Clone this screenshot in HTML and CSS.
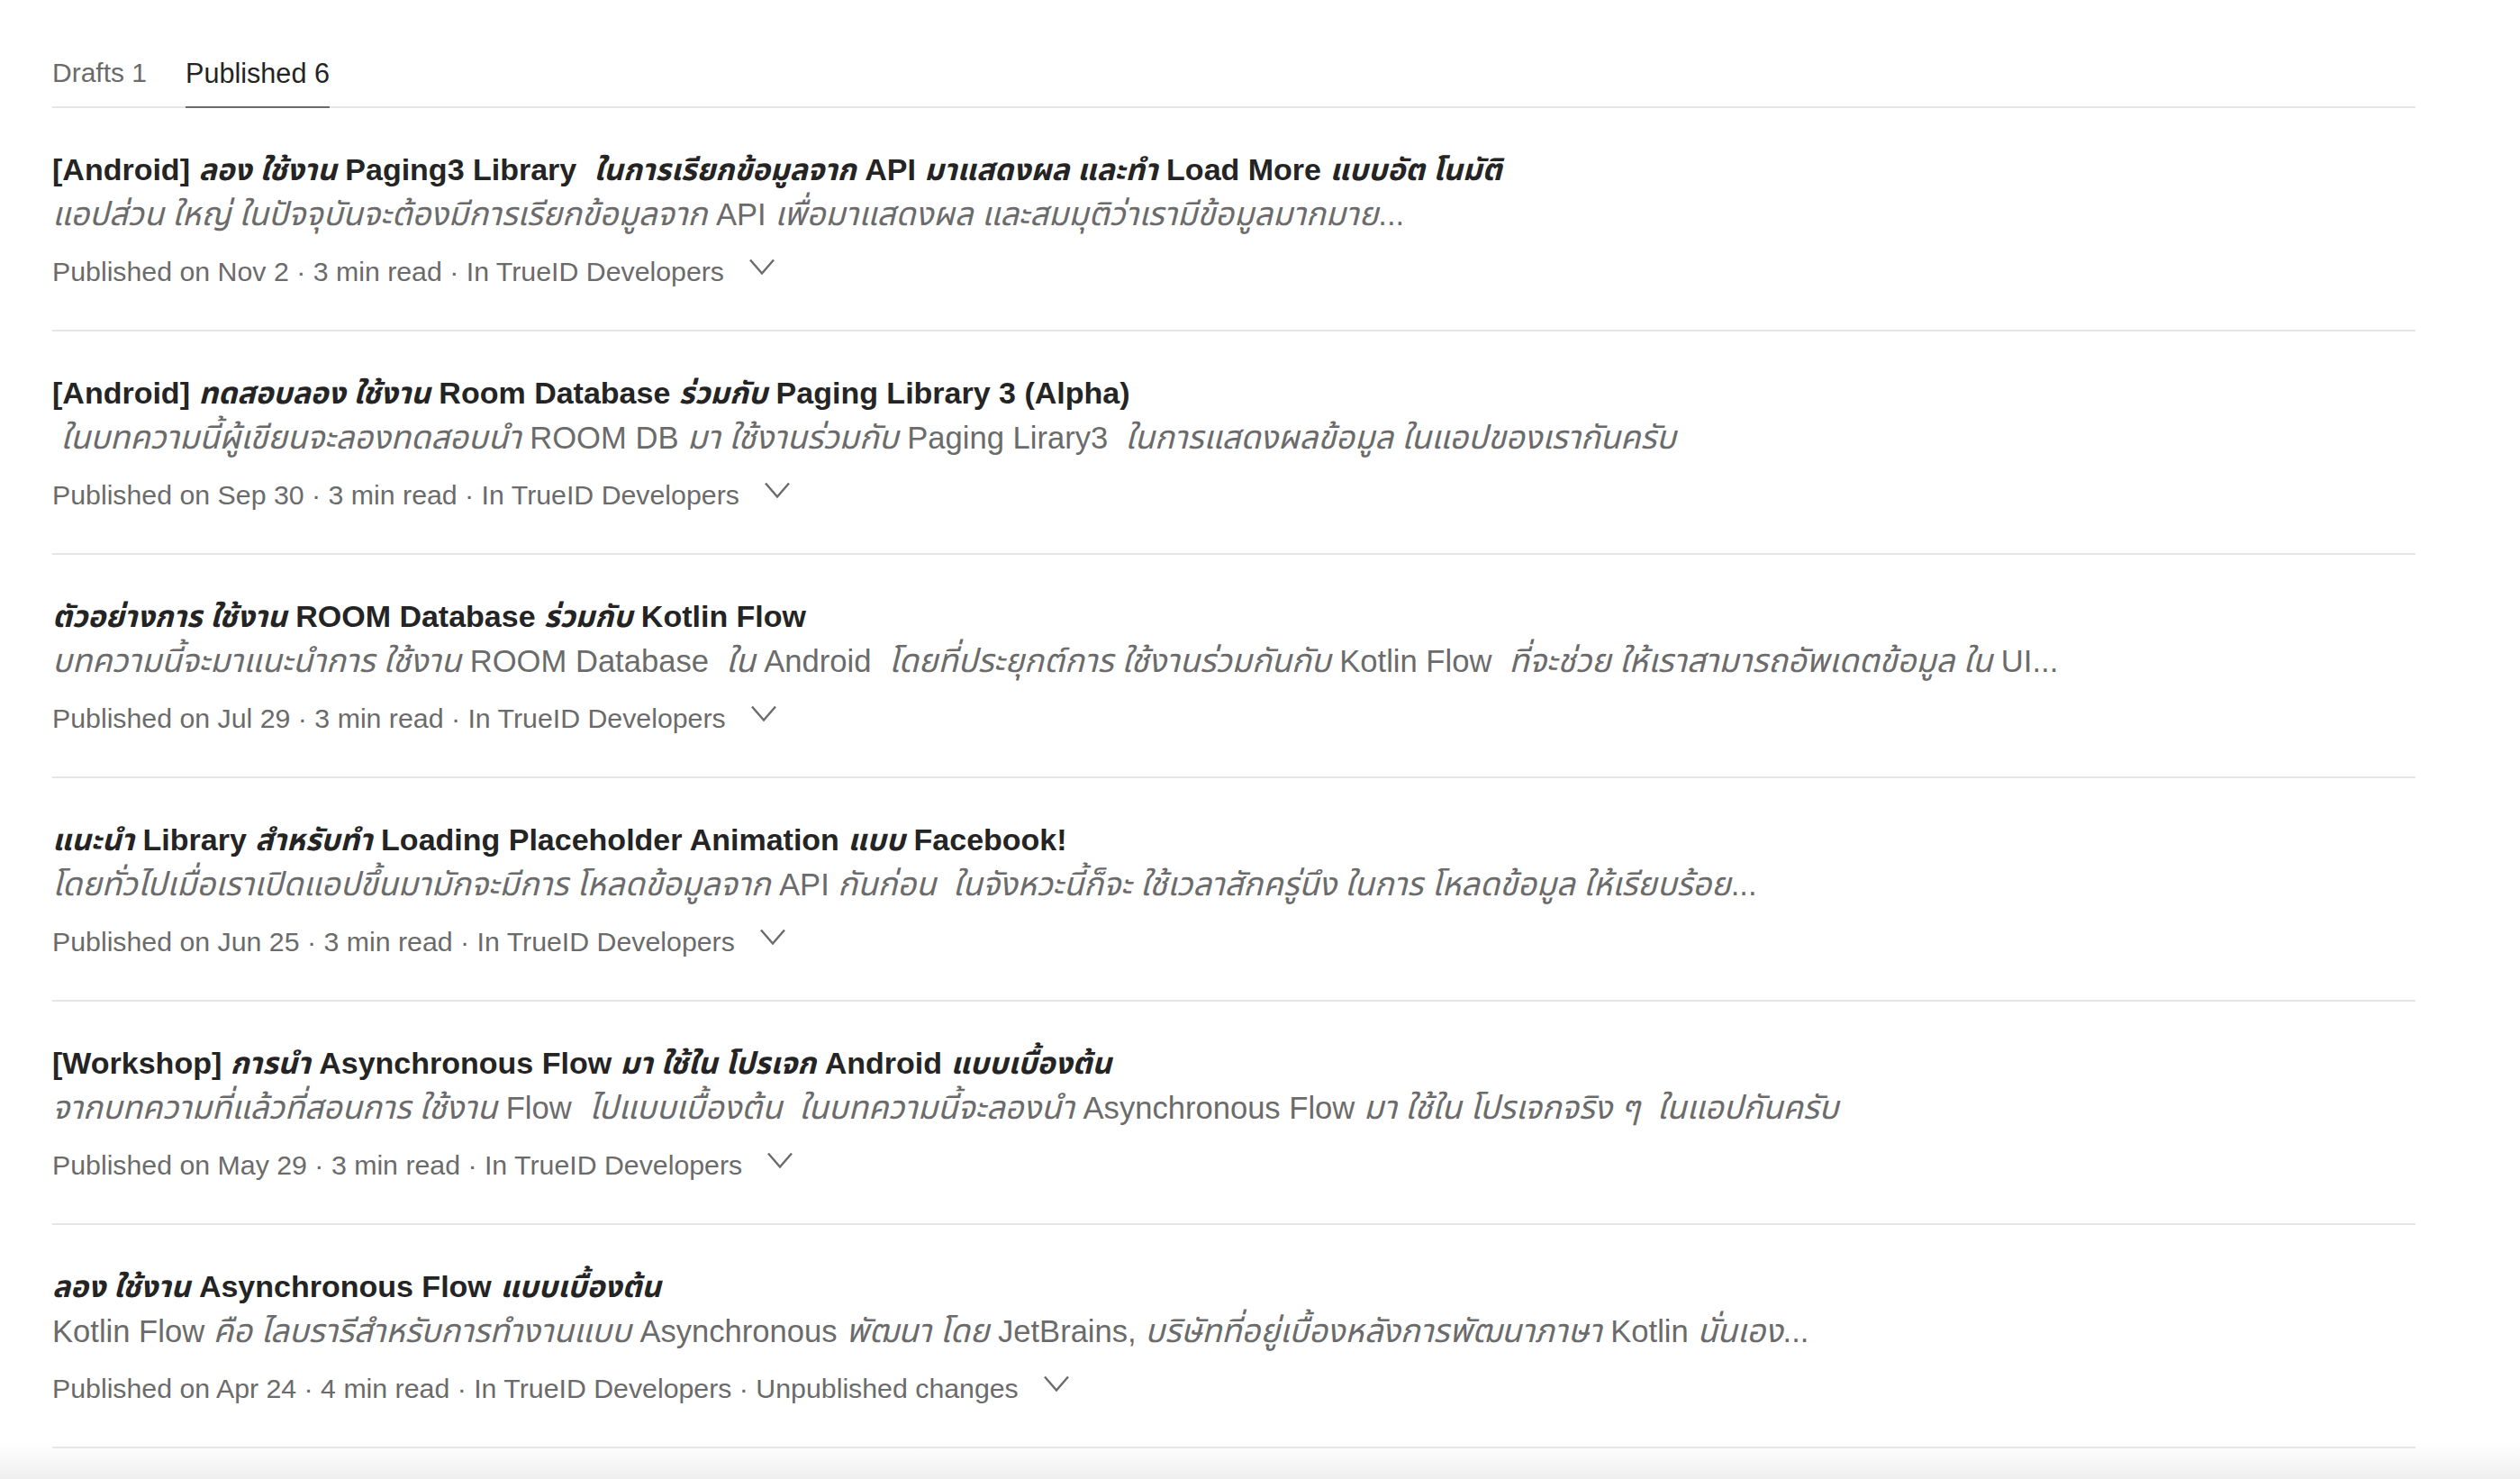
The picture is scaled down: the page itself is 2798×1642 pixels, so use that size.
FILE: index.html
```html
<!DOCTYPE html>
<html lang="en">
<head>
<meta charset="utf-8">
<title>Stories</title>
<link rel="stylesheet" href="styles.css">
</head>
<body>
<main class="page">
  <nav class="tabs">
    <span class="tab">Drafts 1</span>
    <span class="tab tab-active">Published 6</span>
  </nav>

  <section class="list">
    <article class="story">
      <h2 class="title">[Android] <i class="th">ลอง ใช้งาน</i> Paging3 Library &nbsp;<i class="th">ในการเรียกข้อมูลจาก</i> API <i class="th">มาแสดงผล และทำ</i> Load More <i class="th">แบบอัต โนมัติ</i></h2>
      <p class="sub"><i class="th">แอปส่วน ใหญ่ ในปัจจุบันจะต้องมีการเรียกข้อมูลจาก</i> API <i class="th">เพื่อมาแสดงผล และสมมุติว่าเรามีข้อมูลมากมาย</i>...</p>
      <div class="meta"><span>Published on Nov 2 · 3 min read · In TrueID Developers</span><svg class="chev" viewBox="0 0 28 18"><path d="M1 1.5L14 16.5L27 1.5"/></svg></div>
    </article>

    <article class="story">
      <h2 class="title">[Android] <i class="th">ทดสอบลอง ใช้งาน</i> Room Database <i class="th">ร่วมกับ</i> Paging Library 3 (Alpha)</h2>
      <p class="sub">&nbsp;<i class="th">ในบทความนี้ผู้เขียนจะลองทดสอบนำ</i> ROOM DB <i class="th">มา ใช้งานร่วมกับ</i> Paging Lirary3 &nbsp;<i class="th">ในการแสดงผลข้อมูล ในแอปของเรากันครับ</i></p>
      <div class="meta"><span>Published on Sep 30 · 3 min read · In TrueID Developers</span><svg class="chev" viewBox="0 0 28 18"><path d="M1 1.5L14 16.5L27 1.5"/></svg></div>
    </article>

    <article class="story">
      <h2 class="title"><i class="th">ตัวอย่างการ ใช้งาน</i> ROOM Database <i class="th">ร่วมกับ</i> Kotlin Flow</h2>
      <p class="sub"><i class="th">บทความนี้จะมาแนะนำการ ใช้งาน</i> ROOM Database &nbsp;<i class="th">ใน</i> Android &nbsp;<i class="th">โดยที่ประยุกต์การ ใช้งานร่วมกันกับ</i> Kotlin Flow &nbsp;<i class="th">ที่จะช่วย ให้เราสามารถอัพเดตข้อมูล ใน</i> UI...</p>
      <div class="meta"><span>Published on Jul 29 · 3 min read · In TrueID Developers</span><svg class="chev" viewBox="0 0 28 18"><path d="M1 1.5L14 16.5L27 1.5"/></svg></div>
    </article>

    <article class="story">
      <h2 class="title"><i class="th">แนะนำ</i> Library <i class="th">สำหรับทำ</i> Loading Placeholder Animation <i class="th">แบบ</i> Facebook!</h2>
      <p class="sub"><i class="th">โดยทั่วไปเมื่อเราเปิดแอปขึ้นมามักจะมีการ โหลดข้อมูลจาก</i> API <i class="th">กันก่อน &nbsp;ในจังหวะนี้ก็จะ ใช้เวลาสักครู่นึง ในการ โหลดข้อมูล ให้เรียบร้อย</i>...</p>
      <div class="meta"><span>Published on Jun 25 · 3 min read · In TrueID Developers</span><svg class="chev" viewBox="0 0 28 18"><path d="M1 1.5L14 16.5L27 1.5"/></svg></div>
    </article>

    <article class="story">
      <h2 class="title">[Workshop] <i class="th">การนำ</i> Asynchronous Flow <i class="th">มา ใช้ใน โปรเจก</i> Android <i class="th">แบบเบื้องต้น</i></h2>
      <p class="sub"><i class="th">จากบทความที่แล้วที่สอนการ ใช้งาน</i> Flow &nbsp;<i class="th">ไปแบบเบื้องต้น &nbsp;ในบทความนี้จะลองนำ</i> Asynchronous Flow <i class="th">มา ใช้ใน โปรเจกจริง ๆ &nbsp;ในแอปกันครับ</i></p>
      <div class="meta"><span>Published on May 29 · 3 min read · In TrueID Developers</span><svg class="chev" viewBox="0 0 28 18"><path d="M1 1.5L14 16.5L27 1.5"/></svg></div>
    </article>

    <article class="story">
      <h2 class="title"><i class="th">ลอง ใช้งาน</i> Asynchronous Flow <i class="th">แบบเบื้องต้น</i></h2>
      <p class="sub">Kotlin Flow <i class="th">คือ ไลบรารีสำหรับการทำงานแบบ</i> Asynchronous <i class="th">พัฒนา โดย</i> JetBrains, <i class="th">บริษัทที่อยู่เบื้องหลังการพัฒนาภาษา</i> Kotlin <i class="th">นั่นเอง</i>...</p>
      <div class="meta"><span>Published on Apr 24 · 4 min read · In TrueID Developers · Unpublished changes</span><svg class="chev" viewBox="0 0 28 18"><path d="M1 1.5L14 16.5L27 1.5"/></svg></div>
    </article>
  </section>
</main>
<div class="bottom-fade"></div>
</body>
</html>
```

FILE: styles.css
```css
* { box-sizing: border-box; }

html, body {
  margin: 0;
  padding: 0;
  background: #ffffff;
}

body {
  font-family: "Liberation Sans", "Noto Sans", "DejaVu Sans", sans-serif;
  color: #242424;
  overflow: hidden;
}

.page {
  width: 2624px;
  margin-left: 58px;
}

.tabs {
  display: flex;
  gap: 43px;
  padding-top: 61px;
  border-bottom: 2px solid #e6e6e6;
}

.tab {
  font-size: 30px;
  line-height: 40px;
  color: #6b6b6b;
  padding-bottom: 17px;
  margin-bottom: -2px;
  border-bottom: 2px solid transparent;
}

.tab-active {
  color: #242424;
  font-size: 30.6px;
  border-bottom-color: #6b6b6b;
}

.list {
  display: flex;
  flex-direction: column;
}

.story {
  height: 248px;
  padding-top: 48px;
  border-bottom: 2px solid #e6e6e6;
}

.title {
  margin: 0;
  height: 40px;
  font-size: 34px;
  line-height: 40px;
  font-weight: 700;
  color: #242424;
  white-space: nowrap;
}

.title .th {
  font-size: 33.5px;
}

.sub {
  margin: 10px 0 0;
  height: 40px;
  font-size: 34.6px;
  line-height: 40px;
  color: #6b6b6b;
  white-space: nowrap;
}

.sub .th {
  font-size: 36.3px;
}

.th {
  font-style: italic;
  line-height: 20px;
  font-family: "Noto Sans Thai", "Noto Sans Thai UI", "Sarabun", "Loma", "Liberation Sans", sans-serif;
}

.meta {
  display: flex;
  align-items: flex-start;
  gap: 28px;
  margin-top: 24px;
  font-size: 30.3px;
  line-height: 40px;
  color: #6b6b6b;
}

.chev {
  width: 28px;
  height: 18px;
  margin-top: 5px;
  flex: none;
}

.chev path {
  fill: none;
  stroke: #6b6b6b;
  stroke-width: 2.4;
}

.bottom-fade {
  position: fixed;
  left: 0;
  right: 0;
  bottom: 0;
  height: 40px;
  background: linear-gradient(to bottom, rgba(240, 240, 240, 0), #efefef);
  pointer-events: none;
}
```
